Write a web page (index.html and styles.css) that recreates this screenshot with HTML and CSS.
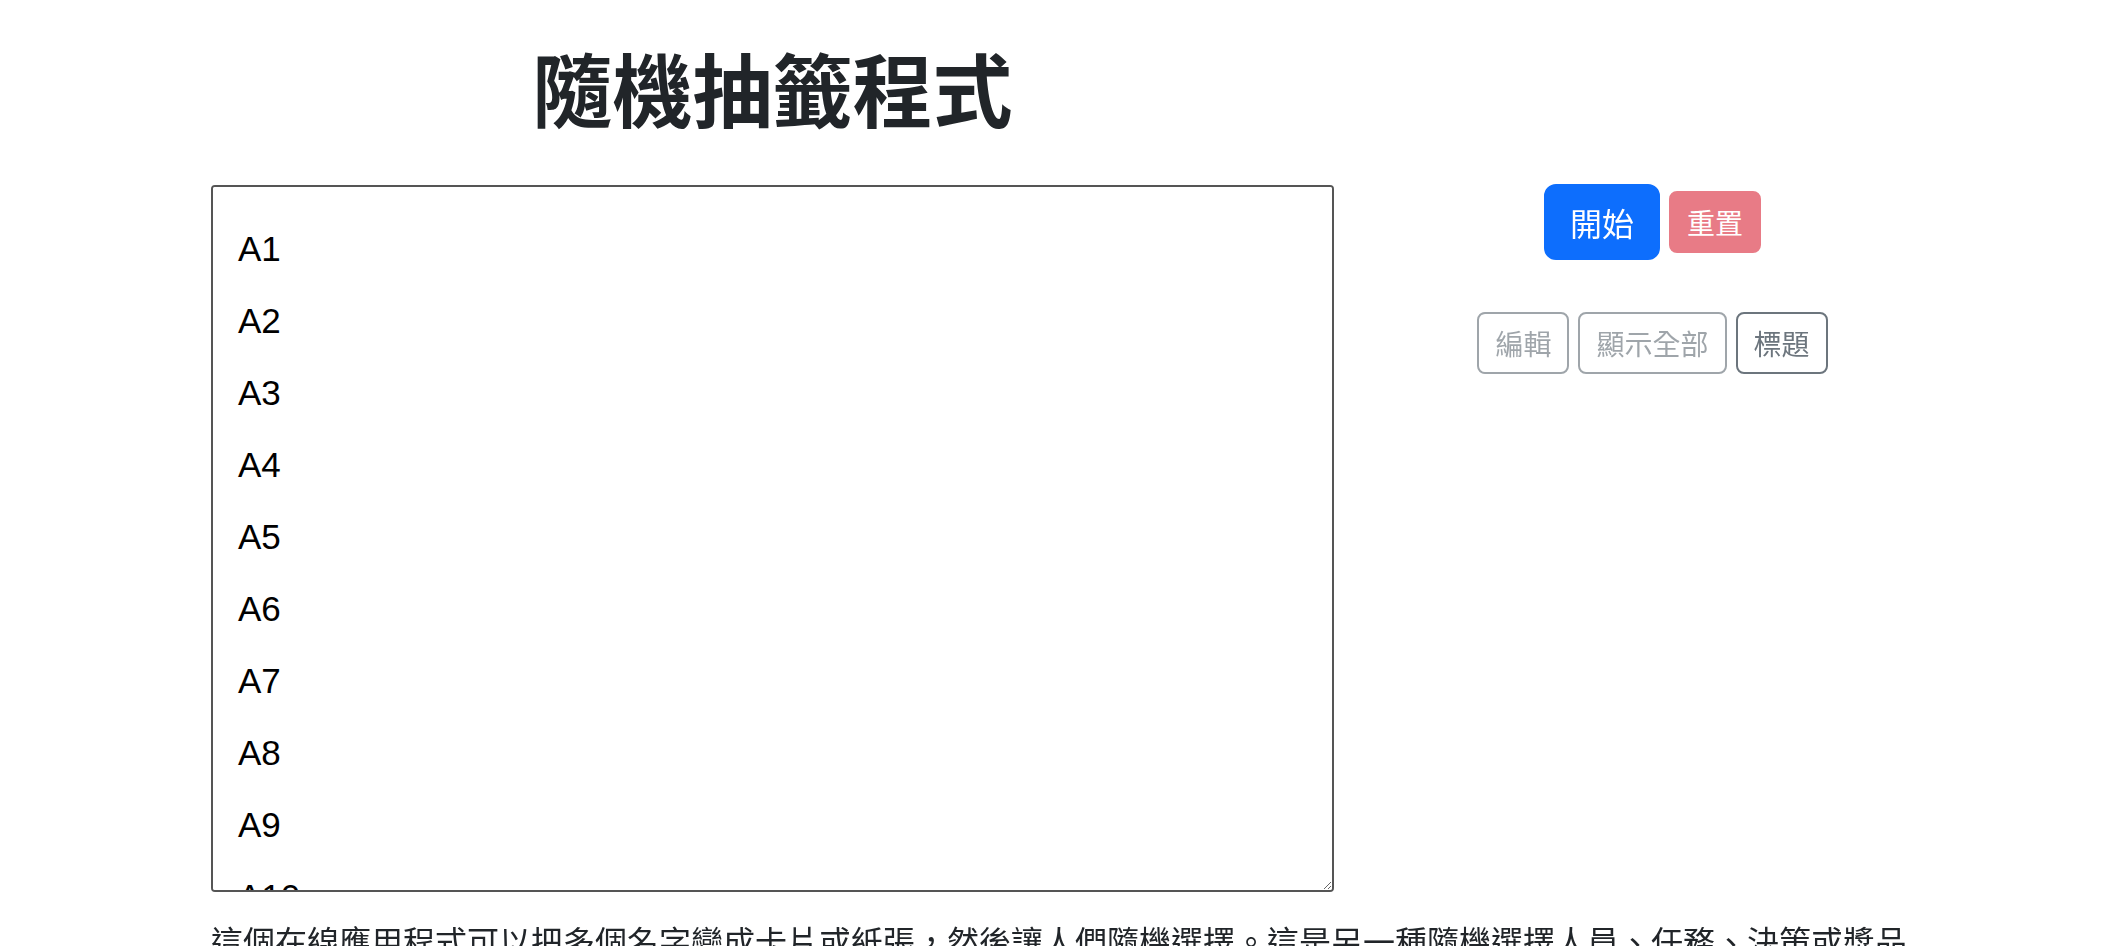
FILE: index.html
```html
<!DOCTYPE html>
<html lang="zh-Hant">
<head>
    <meta charset="UTF-8">
    <meta name="viewport" content="width=device-width, initial-scale=1.0">
    <title>隨機抽籤程式</title>
    <link rel="stylesheet" href="styles.css">
</head>
<body>
    <div class="page">
        <h1 class="title">隨機抽籤程式</h1>

        <div class="main">
            <!-- 名單 -->
            <div class="list-col">
                <textarea id="nameList" class="name-list" spellcheck="false">A1
A2
A3
A4
A5
A6
A7
A8
A9
A10
A11
A12
A13
A14
A15
A16
A17
A18
A19
A20</textarea>
            </div>

            <!-- 操作按鈕 -->
            <div class="side-col">
                <div class="btn-row">
                    <button class="btn btn-primary" id="startBtn">開始</button>
                    <button class="btn btn-sm btn-danger" disabled>重置</button>
                </div>
                <div class="btn-row btn-row-tools">
                    <button class="btn btn-sm btn-outline" disabled>編輯</button>
                    <button class="btn btn-sm btn-outline" disabled>顯示全部</button>
                    <button class="btn btn-sm btn-outline">標題</button>
                </div>
            </div>
        </div>

        <p class="intro">這個在線應用程式可以把多個名字變成卡片或紙張，然後讓人們隨機選擇。這是另一種隨機選擇人員、任務、決策或獎品的方法。</p>
    </div>
</body>
</html>
```

FILE: styles.css
```css
body {
    margin: 0;
    background: #fff;
    color: #212529;
    font-family: "Noto Sans CJK TC", "Liberation Sans", sans-serif;
    font-size: 32px;
    line-height: 1.5;
    overflow: hidden;
}
.page {
    padding: 38px 0 0 211px;
}
.title {
    width: 1123px;
    margin: 0 0 51px;
    text-align: center;
    font-size: 80px;
    line-height: 96px;
    font-weight: 700;
    color: #212529;
}
.main {
    display: flex;
    align-items: flex-start;
}
.list-col {
    width: 1123px;
    flex: 0 0 1123px;
}
.name-list {
    display: block;
    width: 100%;
    height: 707px;
    box-sizing: border-box;
    margin: 0;
    padding: 26px 25px;
    border: 2px solid #555;
    border-radius: 4px;
    font-family: "Liberation Sans", Arial, sans-serif;
    font-size: 35px;
    line-height: 72px;
    color: #000;
    background: #fff;
    scrollbar-width: none;
    outline: none;
}
.side-col {
    flex: 0 0 637px;
    display: flex;
    flex-direction: column;
    align-items: center;
    margin-top: -1px;
}
.btn-row {
    display: flex;
    align-items: center;
    gap: 9px;
}
.btn-row-tools {
    margin-top: 52px;
}
.btn {
    font-family: "Noto Sans CJK TC", sans-serif;
    font-size: 32px;
    line-height: 48px;
    padding: 12px 24px;
    border: 2px solid transparent;
    border-radius: 12px;
    background: transparent;
    cursor: pointer;
}
.btn-sm {
    font-size: 28px;
    line-height: 42px;
    padding: 8px 16px;
    border-radius: 8px;
}
.btn-primary {
    background: #0d6efd;
    border-color: #0d6efd;
    color: #fff;
}
.btn-danger {
    background: #dc3545;
    border-color: #dc3545;
    color: #fff;
}
.btn-outline {
    border-color: #6c757d;
    color: #6c757d;
}
.btn:disabled {
    opacity: 0.65;
    cursor: default;
}
.intro {
    width: 1710px;
    margin: 24px 0 0;
}
```
